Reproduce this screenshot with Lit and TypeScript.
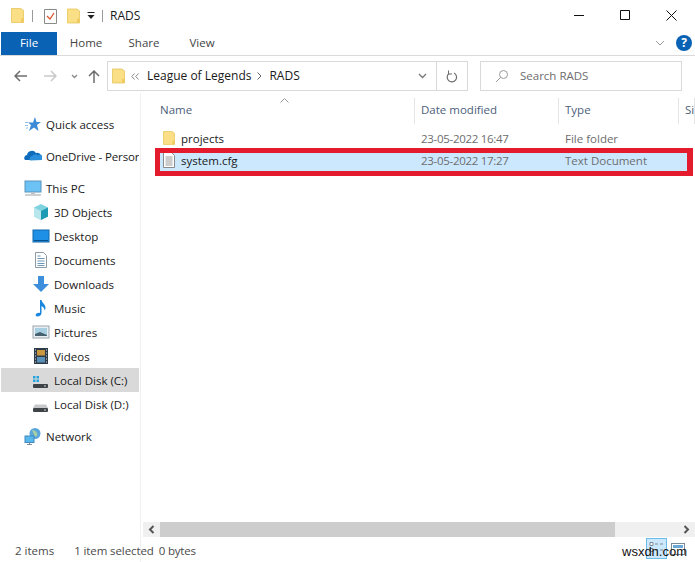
import { LitElement, html, css, svg } from 'lit';
import { customElement } from 'lit/decorators.js';

const folder = (w = 14, h = 16) => html`
  <svg width=${w} height=${h} viewBox="0 0 14 16">
    <path d="M.5.5h10l3 2v13H.5z" fill="#fbdf87" stroke="#e8c964"/>
    <path d="M11 11h2.500v4.500H11z" fill="#f0c95c"/>
  </svg>`;

const icons: Record<string, unknown> = {
  star: svg`<path d="M11 2l1.500 5H17l-4 3 1.500 6-4.500-3.500L5 16l2-6-3-2.500h5z" fill="#3b8bd6"/><path d="M1 7.500h3M1 10.500h3M2 13h2" stroke="#8fc0ea"/>`,
  cloud: svg`<path d="M1 13a3 3 0 0 1 2-5 5 5 0 0 1 9-2 4 4 0 0 1 5 2.500 2.500 2.500 0 0 1 1 4.500z" fill="#0f6cbd"/><path d="M6 13.500a3 3 0 0 1 2-4.500 4 4 0 0 1 6-.5 3 3 0 0 1 4 4.500z" fill="#2c8fdc"/>`,
  pc: svg`<rect x="1" y="2" width="16" height="11" fill="#6cc2f5" stroke="#5b95bd"/><path d="M7 13h4v2H7z" fill="#b9c2c9"/><path d="M1 16h16" stroke="#9aa3aa"/>`,
  cube: svg`<path d="M9 1l7 3.500v9L9 17l-7-3.500v-9z" fill="#7fd3df"/><path d="M9 8l7-3.500v9L9 17z" fill="#1d9bb4"/><path d="M2 4.500L9 8v9l-7-3.500z" fill="#b7e7ec"/>`,
  desk: svg`<rect x="1" y="3" width="16" height="12" fill="#1e90e6" stroke="#1169ad"/><path d="M2 13.500h14" stroke="#0a4f88"/>`,
  doc: svg`<path d="M3.500 1.500h8l3 3v12h-11z" fill="#fff" stroke="#8d99a3"/><path d="M5.500 5h3M5.500 7.500h7M5.500 10h7M5.500 12.500h7M5.500 14.500h7" stroke="#6d95b5"/>`,
  down: svg`<path d="M6 1h6v8h5l-8 8-8-8h5z" fill="#3d8edb"/>`,
  music: svg`<path d="M8 1h1.500c.5 3 4 4 4 8 0 1-.5 2-1 2.500.3-2-1.500-4-3-4.500v7c0 2-2 3.500-4 3.500s-2.500-2-1-3 3-1 3.500-.5z" fill="#1b86dd"/>`,
  pic: svg`<rect x="1" y="3" width="16" height="12" fill="#e8eef2" stroke="#9aa5ad"/><rect x="3" y="5" width="12" height="8" fill="#a9cfe2"/><path d="M3 11l5-2 7 3v1H3z" fill="#46606f"/>`,
  video: svg`<rect x="2" y="1" width="14" height="16" fill="#2d3b46"/><rect x="5" y="3" width="8" height="5.500" fill="#c9973f"/><rect x="5" y="10" width="8" height="5.500" fill="#5a90b8"/><path d="M3 3h1M3 6h1M3 9h1M3 12h1M3 15h1M14 3h1M14 6h1M14 9h1M14 12h1M14 15h1" stroke="#dde"/>`,
  diskc: svg`<path d="M1 5h2.500v2.500H1zM4.500 5H7v2.500H4.500zM1 8.500h2.500V11H1zM4.500 8.500H7V11H4.500z" fill="#25a3df"/><rect x="1" y="13" width="15" height="4" rx="1" fill="#3e4347"/><path d="M12 15h2" stroke="#cfd3d6"/>`,
  diskd: svg`<path d="M3 9.500h11l2 3.500H1z" fill="#c5c9cc"/><rect x="1" y="13" width="15" height="4" rx="1" fill="#3e4347"/><path d="M12 15h2" stroke="#cfd3d6"/>`,
  net: svg`<circle cx="11" cy="6.500" r="5.500" fill="#5aa5dc"/><path d="M8 3c2 0 4 1 5 3s0 3-2 4" fill="#a5cfa2"/><rect x="1" y="9" width="9" height="6.500" fill="#58b8ec" stroke="#3f87bd"/><path d="M3 17.500h5M5.500 15.500v2" stroke="#7d8a94"/>`,
};

interface NavItem { label: string; icon: string; child?: boolean; sel?: boolean; group?: boolean; tight?: boolean; }

const navItems: NavItem[] = [
  { label: 'Quick access', icon: 'star' },
  { label: 'OneDrive - Persor', icon: 'cloud', group: true, tight: true },
  { label: 'This PC', icon: 'pc', group: true },
  { label: '3D Objects', icon: 'cube', child: true },
  { label: 'Desktop', icon: 'desk', child: true },
  { label: 'Documents', icon: 'doc', child: true },
  { label: 'Downloads', icon: 'down', child: true },
  { label: 'Music', icon: 'music', child: true },
  { label: 'Pictures', icon: 'pic', child: true },
  { label: 'Videos', icon: 'video', child: true },
  { label: 'Local Disk (C:)', icon: 'diskc', child: true, sel: true },
  { label: 'Local Disk (D:)', icon: 'diskd', child: true },
  { label: 'Network', icon: 'net', group: true },
];

@customElement('app-root')
export class AppRoot extends LitElement {
  static styles = css`
    :host {
      display: flex;
      flex-direction: column;
      width: 695px;
      height: 562px;
      overflow: hidden;
      background: #fff;
      font-family: "Open Sans", "Noto Sans", sans-serif;
      font-size: 11.5px;
      color: #1a1a1a;
    }

    .title-bar {
      height: 31px;
      display: flex;
      align-items: center;
      padding: 0 0 0 11px;
      flex: none;
    }
    .qa-sep { width: 1px; height: 12px; background: #9a9a9a; flex: none; }
    .sep-a { margin-left: 8px; }
    .sep-b { margin-left: 7px; }
    .qa-check { margin-left: 11px; }
    .qa-folder { margin-left: 10px; display: flex; }
    .qa-drop { margin-left: 7px; }
    .title-text { margin-left: 7px; font-size: 12px; }
    .win-btns { margin-left: auto; display: flex; padding-right: 1px; }
    .win-btn { width: 46px; height: 31px; display: flex; align-items: center; justify-content: center; }

    .tabs {
      height: 24px;
      flex: none;
      display: flex;
      align-items: center;
      border-bottom: 1px solid #dadada;
      padding-left: 1px;
    }
    .tab { width: 58px; text-align: center; color: #444; font-size: 11.5px; padding-bottom: 1px; }
    .tab.file { width: 56px; height: 23px; background: #0a62b4; color: #fff; line-height: 22px; padding: 0; }
    .tabs-right { margin-left: auto; display: flex; align-items: center; gap: 11px; padding-right: 3px; }
    .help {
      width: 16px; height: 16px; border-radius: 50%;
      background: #0a62b4; color: #fff;
      font-weight: 700; font-size: 12px; line-height: 16px; text-align: center;
    }

    .nav {
      height: 30px;
      flex: none;
      margin-top: 5px;
      display: flex;
      align-items: center;
    }
    .nav-btns { width: 107px; flex: none; display: flex; align-items: center; padding-left: 14px; box-sizing: border-box; }
    .nav-fwd { margin-left: 17px; }
    .nav-hist { margin-left: 14px; }
    .nav-up { margin-left: 10px; }
    .address {
      width: 361px; height: 30px; box-sizing: border-box; flex: none;
      border: 1px solid #d9d9d9;
      display: flex; align-items: center;
      padding-left: 4px;
    }
    .crumb-more { margin-left: 6px; }
    .crumb { font-size: 12px; padding-bottom: 2px; color: #1a1a1a; }
    .crumb-first { margin-left: 8px; }
    .chev { margin: 0 7px 0 6px; }
    .addr-drop { margin-left: auto; margin-right: 9px; }
    .refresh { width: 30px; height: 28px; border-left: 1px solid #d9d9d9; display: flex; align-items: center; justify-content: center; }
    .search {
      width: 202px; height: 30px; box-sizing: border-box; flex: none;
      margin-left: 12px;
      border: 1px solid #d9d9d9;
      display: flex; align-items: center;
      padding-left: 14px;
      gap: 11px;
      color: #6d6d6d;
    }
    .search span { padding-bottom: 2px; }

    .main { flex: 1; display: flex; min-height: 0; margin-top: 2px; }
    .sidebar {
      width: 141px; flex: none; box-sizing: border-box;
      border-right: 1px solid #f0f0f0;
      padding: 19px 1px 0 1px;
    }
    .nav-item { height: 24px; display: flex; align-items: center; padding-left: 23px; gap: 4px; white-space: nowrap; overflow: hidden; }
    .nav-item.group { margin-top: 8px; }
    .nav-item.child { padding-left: 31px; }
    .nav-item.sel { background: #d9d9d9; }
    .nav-item.tight { letter-spacing: -0.12px; }
    .nav-item svg { flex: none; }

    .pane { flex: 1; min-width: 0; display: flex; flex-direction: column; position: relative; }
    .header { height: 26px; margin-top: 5px; display: grid; grid-template-columns: 274px 144px 120px 1fr; color: #4c607a; flex: none; position: relative; }
    .col { border-right: 1px solid #e5e5e5; padding-left: 6px; line-height: 24px; white-space: nowrap; overflow: hidden; }
    .col:first-child { padding-left: 19px; }
    .col:last-child { border: 0; }
    .sort { position: absolute; left: 139px; top: 0; }

    .rows { flex: 1; padding: 4px 0 0 14px; }
    .row { height: 20px; width: 537px; margin-bottom: 1px; display: grid; grid-template-columns: 260px 144px 120px 1fr; align-items: center; color: #6d6d6d; box-sizing: border-box; }
    .row.selected { background: #cce8ff; height: 22px; }
    .row-name { display: flex; align-items: center; padding-left: 8px; gap: 6px; color: #1a1a1a; }
    .row-cell { padding-left: 6px; white-space: nowrap; }
    .row-date { letter-spacing: -0.3px; }
    .marker {
      position: absolute;
      left: 14px; top: 55px;
      width: 538px; height: 28px;
      box-sizing: border-box;
      border: 5px solid #e31b2d;
      border-right-width: 6px;
    }

    .hscroll { height: 15px; flex: none; display: flex; background: #f0f0f0; align-items: center; margin-left: 2px; margin-bottom: 3px; }
    .hscroll .arrow { width: 17px; display: flex; justify-content: center; flex: none; }
    .thumb { width: 455px; height: 15px; background: #cdcdcd; }
    .hscroll .end { margin-left: auto; }
    .spacer { height: 22px; flex: none; }

    .status { height: 22px; flex: none; display: flex; align-items: center; padding: 0 0 2px 15px; box-sizing: border-box; color: #4a4a4a; position: relative; margin-top: -22px; }
    .selected-count { margin-left: 20px; letter-spacing: -0.1px; }
    .selected-size { margin-left: 5px; letter-spacing: -0.2px; }
    .views { position: absolute; left: 646px; top: -2px; display: flex; gap: 4px; align-items: center; }
    .view-a { display: flex; width: 21px; height: 21px; box-sizing: border-box; background: #cce8ff; border: 1px solid #6bbce8; }
    .watermark { position: absolute; left: 622px; top: 4px; font-size: 13px; color: #111; font-family: "Liberation Sans", sans-serif; }
  `;

  render() {
    return html`
      <div class="title-bar">
        ${folder(13, 15)}
        <span class="qa-sep sep-a"></span>
        <svg class="qa-check" width="13" height="16" viewBox="0 0 13 16">
          <path d="M.5 1.500h12v14H.5z" fill="#fff" stroke="#8a8a8a"/>
          <path d="M3 8l3 3 4-6" fill="none" stroke="#d9522c" stroke-width="1.300"/>
        </svg>
        <span class="qa-folder">${folder(13, 16)}</span>
        <svg class="qa-drop" width="8" height="9" viewBox="0 0 8 9"><path d="M.5 1.500h7" stroke="#222"/><path d="M.5 4h7L4 8z" fill="#222"/></svg>
        <span class="qa-sep sep-b"></span>
        <span class="title-text">RADS</span>
        <div class="win-btns">
          <div class="win-btn"><svg width="11" height="11"><path d="M0 5.500h10" stroke="#111"/></svg></div>
          <div class="win-btn"><svg width="11" height="11"><path d="M.5.500h9v9h-9z" fill="none" stroke="#111"/></svg></div>
          <div class="win-btn"><svg width="11" height="11"><path d="M.5.500l10 10M10.500.500l-10 10" stroke="#111"/></svg></div>
        </div>
      </div>

      <div class="tabs">
        <div class="tab file">File</div>
        <div class="tab">Home</div>
        <div class="tab">Share</div>
        <div class="tab">View</div>
        <div class="tabs-right">
          <svg width="10" height="6"><path d="M1 1l4 4 4-4" fill="none" stroke="#9a9a9a"/></svg>
          <div class="help">?</div>
        </div>
      </div>

      <div class="nav">
        <div class="nav-btns">
          <svg width="13" height="12" viewBox="0 0 13 12"><path d="M6 1L1 6l5 5M1 6h12" fill="none" stroke="#6d6d6d" stroke-width="1.500"/></svg>
          <svg class="nav-fwd" width="13" height="12" viewBox="0 0 13 12"><path d="M7 1l5 5-5 5M12 6H0" fill="none" stroke="#c9c9c9" stroke-width="1.500"/></svg>
          <svg class="nav-hist" width="7" height="5" viewBox="0 0 7 5"><path d="M1 1l2.500 2.500L6 1" fill="none" stroke="#8a8a8a" stroke-width="1.300"/></svg>
          <svg class="nav-up" width="12" height="13" viewBox="0 0 12 13"><path d="M1 6l5-5 5 5M6 1v12" fill="none" stroke="#6d6d6d" stroke-width="1.500"/></svg>
        </div>
        <div class="address">
          ${folder(13, 16)}
          <svg class="crumb-more" width="8" height="7" viewBox="0 0 8 7"><path d="M3.500.5L.8 3.500l2.700 3M7.500.5L4.800 3.500l2.700 3" fill="none" stroke="#8a8a8a"/></svg>
          <span class="crumb crumb-first">League of Legends</span>
          <svg class="chev" width="5" height="8"><path d="M.5.500L4 4 .5 7.500" fill="none" stroke="#666"/></svg>
          <span class="crumb">RADS</span>
          <svg class="addr-drop" width="9" height="6" viewBox="0 0 9 6"><path d="M1 1l3.500 3.500L8 1" fill="none" stroke="#777" stroke-width="1.300"/></svg>
          <div class="refresh">
            <svg width="12" height="13" viewBox="0 0 12 13"><path d="M3 3.500A4.700 4.700 0 1 0 8 3" fill="none" stroke="#6d6d6d" stroke-width="1.200"/><path d="M2.500 .5v3.500H6" fill="none" stroke="#6d6d6d"/></svg>
          </div>
        </div>
        <div class="search">
          <svg width="14" height="14" viewBox="0 0 14 14"><circle cx="8.500" cy="5.500" r="4" fill="none" stroke="#9a9a9a"/><path d="M5.500 8.500L1 13" stroke="#9a9a9a"/></svg>
          <span>Search RADS</span>
        </div>
      </div>

      <div class="main">
        <div class="sidebar">
          ${navItems.map(n => html`
            <div class="nav-item ${n.child ? 'child' : ''} ${n.sel ? 'sel' : ''} ${n.group ? 'group' : ''} ${n.tight ? 'tight' : ''}">
              <svg width="18" height="18" viewBox="0 0 18 18">${icons[n.icon]}</svg>
              ${n.label}
            </div>`)}
        </div>
        <div class="pane">
          <div class="header">
            <div class="col">Name</div>
            <div class="col">Date modified</div>
            <div class="col">Type</div>
            <div class="col">Size</div>
            <svg class="sort" width="9" height="5" viewBox="0 0 9 5"><path d="M.5 4.500l4-4 4 4" fill="none" stroke="#9a9a9a"/></svg>
          </div>
          <div class="rows">
            <div class="row">
              <div class="row-name">${folder(12, 16)}<span>projects</span></div>
              <div class="row-cell row-date">23-05-2022 16:47</div>
              <div class="row-cell">File folder</div>
            </div>
            <div class="row selected">
              <div class="row-name">
                <svg width="12" height="16" viewBox="0 0 12 16"><path d="M.5.500h8l3 3v12H.5z" fill="#fff" stroke="#8a8a8a"/><path d="M2.500 5h7M2.500 7h7M2.500 9h7M2.500 11h7M2.500 13h7" stroke="#9a9a9a"/></svg>
                <span>system.cfg</span>
              </div>
              <div class="row-cell row-date">23-05-2022 17:27</div>
              <div class="row-cell">Text Document</div>
            </div>
          </div>
          <div class="marker"></div>
          <div class="hscroll">
            <div class="arrow"><svg width="7" height="9" viewBox="0 0 7 9"><path d="M5.500 1L2 4.500 5.500 8" fill="none" stroke="#555" stroke-width="2"/></svg></div>
            <div class="thumb"></div>
            <div class="arrow end"><svg width="7" height="9" viewBox="0 0 7 9"><path d="M1.500 1L5 4.500 1.500 8" fill="none" stroke="#555" stroke-width="2"/></svg></div>
          </div>
          <div class="spacer"></div>
        </div>
      </div>

      <div class="status">
        <span>2 items</span>
        <span class="selected-count">1 item selected</span>
        <span class="selected-size">0 bytes</span>
        <div class="views">
          <div class="view-a">
            <svg width="19" height="19" viewBox="0 0 19 19"><path d="M3 3.500h3v3H3zM3 9.500h3v3H3z" fill="#fff" stroke="#7a8a96"/><path d="M8 5h3M13 5h3M8 11h3M13 11h3" stroke="#7a8a96"/></svg>
          </div>
          <svg width="14" height="12" viewBox="0 0 14 12"><rect x=".5" y=".5" width="13" height="11" fill="#fff" stroke="#7a8a96"/><rect x="2" y="2" width="10" height="3" fill="#6aa9d6"/></svg>
        </div>
        <div class="watermark">wsxdn.com</div>
      </div>
    `;
  }
}
